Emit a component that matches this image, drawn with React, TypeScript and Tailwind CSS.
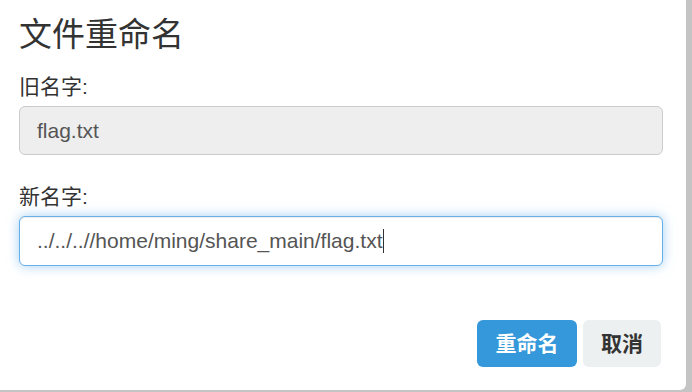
export default function App() {
  const font = { fontFamily: '"Liberation Sans", "Noto Sans CJK SC", sans-serif' };

  return (
    <div className="w-[692px] h-[392px] bg-[#c4c4c4] overflow-hidden" style={font}>
      <div className="w-[686px] h-[390px] bg-white rounded-br-[6px] px-[19px] flex flex-col">
        <h4 className="mt-[17px] h-[36px] leading-[36px] text-[33px] text-[#333] font-normal">文件重命名</h4>

        <label className="mt-[19px] h-[30px] leading-[30px] text-[21px] text-[#333]">旧名字:</label>
        <div className="mt-[4px] w-[644px] h-[49px] rounded-[6px] border border-[#cccccc] bg-[#eeeeee] px-[17px] flex items-center text-[21px] text-[#555]">
          flag.txt
        </div>

        <label className="mt-[27px] h-[30px] leading-[30px] text-[21px] text-[#333]">新名字:</label>
        <div className="mt-[4px] w-[644px] h-[50px] rounded-[6px] border border-[#66afe9] bg-white px-[17px] flex items-center text-[21px] text-[#555] shadow-[inset_0_1px_1px_rgba(0,0,0,0.075),0_0_12px_rgba(102,175,233,0.6)]">
          ../../..//home/ming/share_main/flag.txt
          <span className="inline-block w-px h-[24px] bg-[#333]" />
        </div>

        <div className="mt-[54px] flex justify-end gap-[6px] pr-[6px]">
          <button className="w-[100px] h-[47px] rounded-[6px] bg-[#3498db] text-white text-[21px] font-bold">重命名</button>
          <button className="w-[78px] h-[47px] rounded-[6px] bg-[#ecf0f1] text-[#333] text-[21px] font-bold">取消</button>
        </div>
      </div>
    </div>
  );
}
